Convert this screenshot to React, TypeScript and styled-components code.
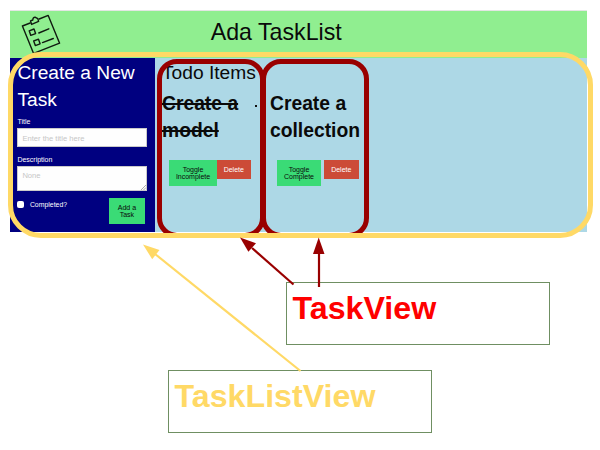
import React from "react";
import styled, { createGlobalStyle, css } from "styled-components";

const GlobalStyle = createGlobalStyle`
  * { box-sizing: border-box; }
  body {
    margin: 0;
    background: #fff;
    font-family: "Liberation Sans", Arial, Helvetica, sans-serif;
    color: #0a0a0a;
  }
`;

const Page = styled.div`
  position: relative;
  width: 600px;
  height: 450px;
  overflow: hidden;
  padding-top: 10px;
`;

const AppFrame = styled.div`
  width: 577px;
  height: 222px;
  margin-left: 10px;
  border-top: 1px solid #e4e6e4;
`;

const Header = styled.header`
  display: flex;
  height: 47px;
  padding-left: 10px;
  background: #90ee90;
`;

const Logo = styled.svg`
  flex: none;
  width: 42px;
  height: 46px;
`;

const Heading = styled.h1`
  margin: 0 0 0 148.7px;
  font-size: 23.2px;
  font-weight: 400;
  line-height: 42px;
  white-space: nowrap;
`;

const Main = styled.main`
  display: flex;
  height: 174px;
  background: #add8e6;
`;

const Sidebar = styled.form`
  flex: none;
  display: flex;
  flex-direction: column;
  width: 145px;
  padding: 1px 7.6px 0 7.4px;
  background: #000080;
  color: #fff;
`;

const SectionTitle = styled.h2`
  margin: 0;
  font-size: 19.2px;
  font-weight: 400;
  line-height: 27px;
  white-space: nowrap;
`;

const FieldLabel = styled.label<{ $gap: number }>`
  margin-top: ${(p) => p.$gap}px;
  font-size: 7px;
  line-height: 9px;
  height: 9px;
`;

const fieldStyle = css`
  display: block;
  width: 130px;
  margin: 2px 0 0;
  border: 1px solid #cacaca;
  border-radius: 0;
  background: #fefefe;
  font-family: inherit;
  font-size: 7.6px;
  &::placeholder {
    color: #c6c6c6;
    opacity: 1;
  }
`;

const TextField = styled.input`
  ${fieldStyle}
  height: 19px;
  padding: 1px 4px 0;
`;

const TextArea = styled.textarea`
  ${fieldStyle}
  height: 25px;
  padding: 4px;
  line-height: 10px;
  overflow: hidden;
  resize: none;
`;

const FieldWrap = styled.div`
  position: relative;
`;

const Grip = styled.svg`
  position: absolute;
  right: 1px;
  bottom: 1px;
  width: 5px;
  height: 5px;
`;

const FormFooter = styled.div`
  display: flex;
  margin-top: 7px;
`;

const Check = styled.span`
  width: 7px;
  height: 7px;
  margin-top: 3px;
  border-radius: 2px;
  background: #fff;
`;

const CheckLabel = styled.label`
  width: 79px;
  margin-left: 5.5px;
  padding-top: 2px;
  font-size: 6.9px;
  line-height: 9px;
`;

type Tone = "success" | "alert";

const Button = styled.button<{ $tone: Tone; $width: number }>`
  flex: none;
  width: ${(p) => p.$width}px;
  height: ${(p) => (p.$tone === "success" ? 26 : 19)}px;
  margin: 0;
  padding: 0;
  border: 0;
  background: ${(p) => (p.$tone === "success" ? "#3adb76" : "#cc4b37")};
  color: ${(p) => (p.$tone === "success" ? "#0a0a0a" : "#fefefe")};
  font-family: inherit;
  font-size: 7px;
  line-height: 7px;
`;

const List = styled.section`
  display: flex;
  flex-direction: column;
  padding: 1px 0 0 7px;
`;

const Tasks = styled.div`
  display: flex;
  margin-top: 4px;
`;

const Task = styled.article`
  display: flex;
  flex-direction: column;
  width: 108px;
`;

const TitleRow = styled.div`
  display: flex;
  height: 54px;
`;

const TaskTitle = styled.h3<{ $done?: boolean }>`
  width: 93px;
  margin: 0;
  font-size: 19.3px;
  font-weight: 700;
  line-height: 27.4px;
  text-decoration: ${(p) => (p.$done ? "line-through" : "none")};
  text-decoration-thickness: 1.5px;
`;

const Bullet = styled.span`
  width: 2px;
  height: 2px;
  margin-top: 15px;
  background: #111;
`;

const Actions = styled.div<{ $gap: number }>`
  display: flex;
  gap: ${(p) => p.$gap}px;
  padding: 16px 0 0 7px;
`;

const Ring = styled.div<{ $x: number; $y: number; $w: number; $h: number; $r: number; $color: string }>`
  position: absolute;
  left: ${(p) => p.$x}px;
  top: ${(p) => p.$y}px;
  width: ${(p) => p.$w}px;
  height: ${(p) => p.$h}px;
  border: 5px solid ${(p) => p.$color};
  border-radius: ${(p) => p.$r}px;
  pointer-events: none;
`;

const Callout = styled.div<{ $indent: number; $gap: number; $color: string }>`
  width: 264px;
  height: 63px;
  margin: ${(p) => p.$gap}px 0 0 ${(p) => p.$indent}px;
  padding-left: 5.5px;
  border: 1px solid #6f8f62;
  color: ${(p) => p.$color};
  font-size: 32.2px;
  font-weight: 700;
  line-height: 51px;
`;

const Arrows = styled.svg`
  position: absolute;
  left: 0;
  top: 0;
  width: 600px;
  height: 450px;
  pointer-events: none;
`;

const YELLOW = "#ffd966";
const RED = "#990000";

const ClipboardIcon = () => (
  <Logo viewBox="20 11 42 46" fill="none" stroke="#101a10" strokeWidth="1.4" strokeLinejoin="round" strokeLinecap="round">
    <path d="M30.2 23 L22.4 26 L33.6 53.4 L59.6 43.2 L48.2 15.4 L39.2 19" />
    <path d="M30.5 20.8 L32.8 20 Q33 17 35.4 17.3 L37.8 18.6 L38.6 21.4 L31.6 24.4 Z" />
    <path d="M29.2 30.8 L34 29 L35.6 33.6 L30.8 35.4 Z" />
    <path d="M33.7 41 L38.5 39.2 L40.1 43.8 L35.3 45.6 Z" />
    <path d="M38.8 33 L48.8 28.8 M42.5 42.6 L53.3 38.5" />
  </Logo>
);

export default function App() {
  return (
    <>
      <GlobalStyle />
      <Page>
        <AppFrame>
          <Header>
            <ClipboardIcon />
            <Heading>Ada TaskList</Heading>
          </Header>
          <Main>
            <Sidebar>
              <SectionTitle>
                Create a New
                <br />
                Task
              </SectionTitle>
              <FieldLabel $gap={4}>Title</FieldLabel>
              <TextField placeholder="Enter the title here" />
              <FieldLabel $gap={8}>Description</FieldLabel>
              <FieldWrap>
                <TextArea placeholder="None" />
                <Grip viewBox="0 0 5 5" stroke="#888" strokeWidth="0.7">
                  <path d="M0 5 L5 0 M2.5 5 L5 2.5" />
                </Grip>
              </FieldWrap>
              <FormFooter>
                <Check />
                <CheckLabel>Completed?</CheckLabel>
                <Button type="button" $tone="success" $width={36}>
                  Add a
                  <br />
                  Task
                </Button>
              </FormFooter>
            </Sidebar>
            <List>
              <SectionTitle>Todo Items</SectionTitle>
              <Tasks>
                <Task>
                  <TitleRow>
                    <TaskTitle $done>Create a model</TaskTitle>
                    <Bullet />
                  </TitleRow>
                  <Actions $gap={0}>
                    <Button $tone="success" $width={48}>
                      Toggle
                      <br />
                      Incomplete
                    </Button>
                    <Button $tone="alert" $width={33.5}>
                      Delete
                    </Button>
                  </Actions>
                </Task>
                <Task>
                  <TitleRow>
                    <TaskTitle>Create a collection</TaskTitle>
                  </TitleRow>
                  <Actions $gap={3}>
                    <Button $tone="success" $width={44}>
                      Toggle
                      <br />
                      Complete
                    </Button>
                    <Button $tone="alert" $width={34.5}>
                      Delete
                    </Button>
                  </Actions>
                </Task>
              </Tasks>
            </List>
          </Main>
        </AppFrame>

        <Callout $indent={286} $gap={50} $color="#ff0000">
          TaskView
        </Callout>
        <Callout $indent={168} $gap={25} $color={YELLOW}>
          TaskListView
        </Callout>

        <Ring $x={156.5} $y={58.5} $w={108.5} $h={179} $r={20} $color={RED} />
        <Ring $x={260.5} $y={58.5} $w={108} $h={179} $r={20} $color={RED} />
        <Ring $x={8} $y={52} $w={585} $h={186} $r={33} $color={YELLOW} />

        <Arrows viewBox="0 0 600 450">
          <g stroke={RED} fill={RED} strokeWidth="2.2">
            <path d="M293.5 284.5 L252 248" />
            <path d="M319 287 V253" />
            <path stroke="none" d="M240 237.5 L256 243.3 L248.4 251.8 Z" />
            <path stroke="none" d="M318.7 237.5 L324.5 254 L313 254 Z" />
          </g>
          <g stroke={YELLOW} fill={YELLOW} strokeWidth="2.2">
            <path d="M300.5 371 L155 254" />
            <path stroke="none" d="M143 244.5 L159.5 250 L152.2 259.2 Z" />
          </g>
        </Arrows>
      </Page>
    </>
  );
}
